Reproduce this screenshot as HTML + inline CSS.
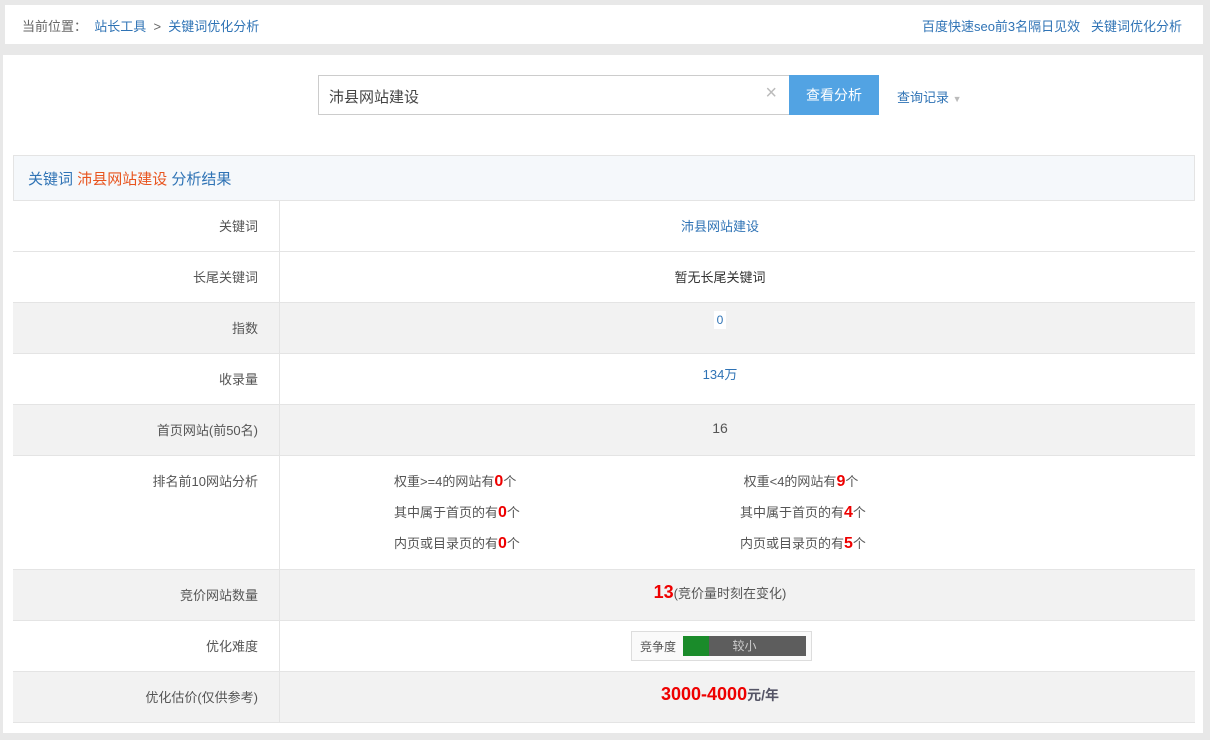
<!DOCTYPE html>
<html><head><meta charset="utf-8"><style>
*{margin:0;padding:0;box-sizing:border-box}
body{width:1210px;height:740px;background:#e8e8e8;font-family:"Liberation Sans","Noto Sans CJK SC",sans-serif;font-size:13px;color:#555;position:relative;overflow:hidden}
.a{position:absolute}
.blue{color:#2f73b5}
.row{position:absolute;left:13px;width:1182px;border-top:1px solid #e4e4e4}
.row .l{position:absolute;left:0;top:0;bottom:0;width:267px;border-right:1px solid #e4e4e4;text-align:right;padding-right:21px}
.g{background:#f2f2f2}
.w{background:#fff}
.c{position:absolute;left:268px;right:36px;text-align:center}
.red{color:#e00;font-weight:bold}
</style></head><body>
<div class="a" style="left:5px;top:5px;width:1198px;height:39px;background:#fff"></div>
<div class="a" style="left:22px;top:16px;color:#666">当前位置：&nbsp; <span class="blue">站长工具</span> &nbsp;&gt;&nbsp; <span class="blue">关键词优化分析</span></div>
<div class="a blue" style="right:28px;top:16px">百度快速seo前3名隔日见效&nbsp;&nbsp; 关键词优化分析</div>
<div class="a" style="left:3px;top:55px;width:1200px;height:678px;background:#fff"></div>
<div class="a" style="left:318px;top:75px;width:472px;height:40px;border:1px solid #ccc;font-size:15px;color:#444;padding:10px 10px">沛县网站建设<span style="position:absolute;right:12px;top:6px;color:#bbb;font-size:20px">×</span></div>
<div class="a" style="left:789px;top:75px;width:90px;height:40px;background:#52a3e3;color:#fff;text-align:center;line-height:40px;font-size:14px">查看分析</div>
<div class="a blue" style="left:897px;top:87px">查询记录 <span style="color:#bbb;font-size:9px">▼</span></div>
<div class="a" style="left:13px;top:155px;width:1182px;height:568px;border:1px solid #e4e4e4"></div>
<div class="a" style="left:14px;top:156px;width:1180px;height:44px;background:#f5f8fb;font-size:15px;padding:12px 14px" ><span class="blue">关键词</span> <span style="color:#e8541e">沛县网站建设</span> <span class="blue">分析结果</span></div>
<div class="row w" style="top:200px;height:51px"><div class="l" style="padding-top:15px">关键词</div><div class="c blue" style="top:15px">沛县网站建设</div></div>
<div class="row w" style="top:251px;height:51px"><div class="l" style="padding-top:15px">长尾关键词</div><div class="c" style="top:15px;color:#333">暂无长尾关键词</div></div>
<div class="row g" style="top:302px;height:51px"><div class="l" style="padding-top:15px">指数</div><div class="c blue" style="top:10px;font-size:12px"><span style="background:#fff;padding:2px 3px">0</span></div></div>
<div class="row w" style="top:353px;height:51px"><div class="l" style="padding-top:15px">收录量</div><div class="c blue" style="top:10px">134万</div></div>
<div class="row g" style="top:404px;height:51px"><div class="l" style="padding-top:15px">首页网站(前50名)</div><div class="c" style="top:15px;font-size:14px">16</div></div>
<div class="row w" style="top:455px;height:114px"><div class="l" style="padding-top:15px">排名前10网站分析</div>
<div class="a" style="left:381px;top:10px;line-height:31px">权重&gt;=4的网站有<span class="red" style="font-size:16px">0</span>个<br>其中属于首页的有<span class="red" style="font-size:16px">0</span>个<br>内页或目录页的有<span class="red" style="font-size:16px">0</span>个</div>
<div class="a" style="left:727px;top:10px;line-height:31px">&nbsp;权重&lt;4的网站有<span class="red" style="font-size:16px">9</span>个<br>其中属于首页的有<span class="red" style="font-size:16px">4</span>个<br>内页或目录页的有<span class="red" style="font-size:16px">5</span>个</div></div>
<div class="row g" style="top:569px;height:51px"><div class="l" style="padding-top:15px">竞价网站数量</div><div class="c" style="top:12px"><span class="red" style="font-size:18px">13</span>(竞价量时刻在变化)</div></div>
<div class="row w" style="top:620px;height:51px"><div class="l" style="padding-top:15px">优化难度</div>
<div class="a" style="left:618px;top:10px;width:181px;height:30px;border:1px solid #ddd;background:#fafafa"><span class="a" style="left:8px;top:6px;font-size:12px">竞争度</span><div class="a" style="left:51px;top:4px;width:123px;height:20px;background:#5d5d5d;color:#ccc;font-size:12px;text-align:center;line-height:20px"><div class="a" style="left:0;top:0;width:26px;height:20px;background:#1a8b2a"></div>较小</div></div></div>
<div class="row g" style="top:671px;height:51px"><div class="l" style="padding-top:15px">优化估价(仅供参考)</div><div class="c" style="top:12px"><span class="red" style="font-size:18px">3000-4000</span><b style="color:#556;font-size:14px">元/年</b></div></div>
</body></html>
